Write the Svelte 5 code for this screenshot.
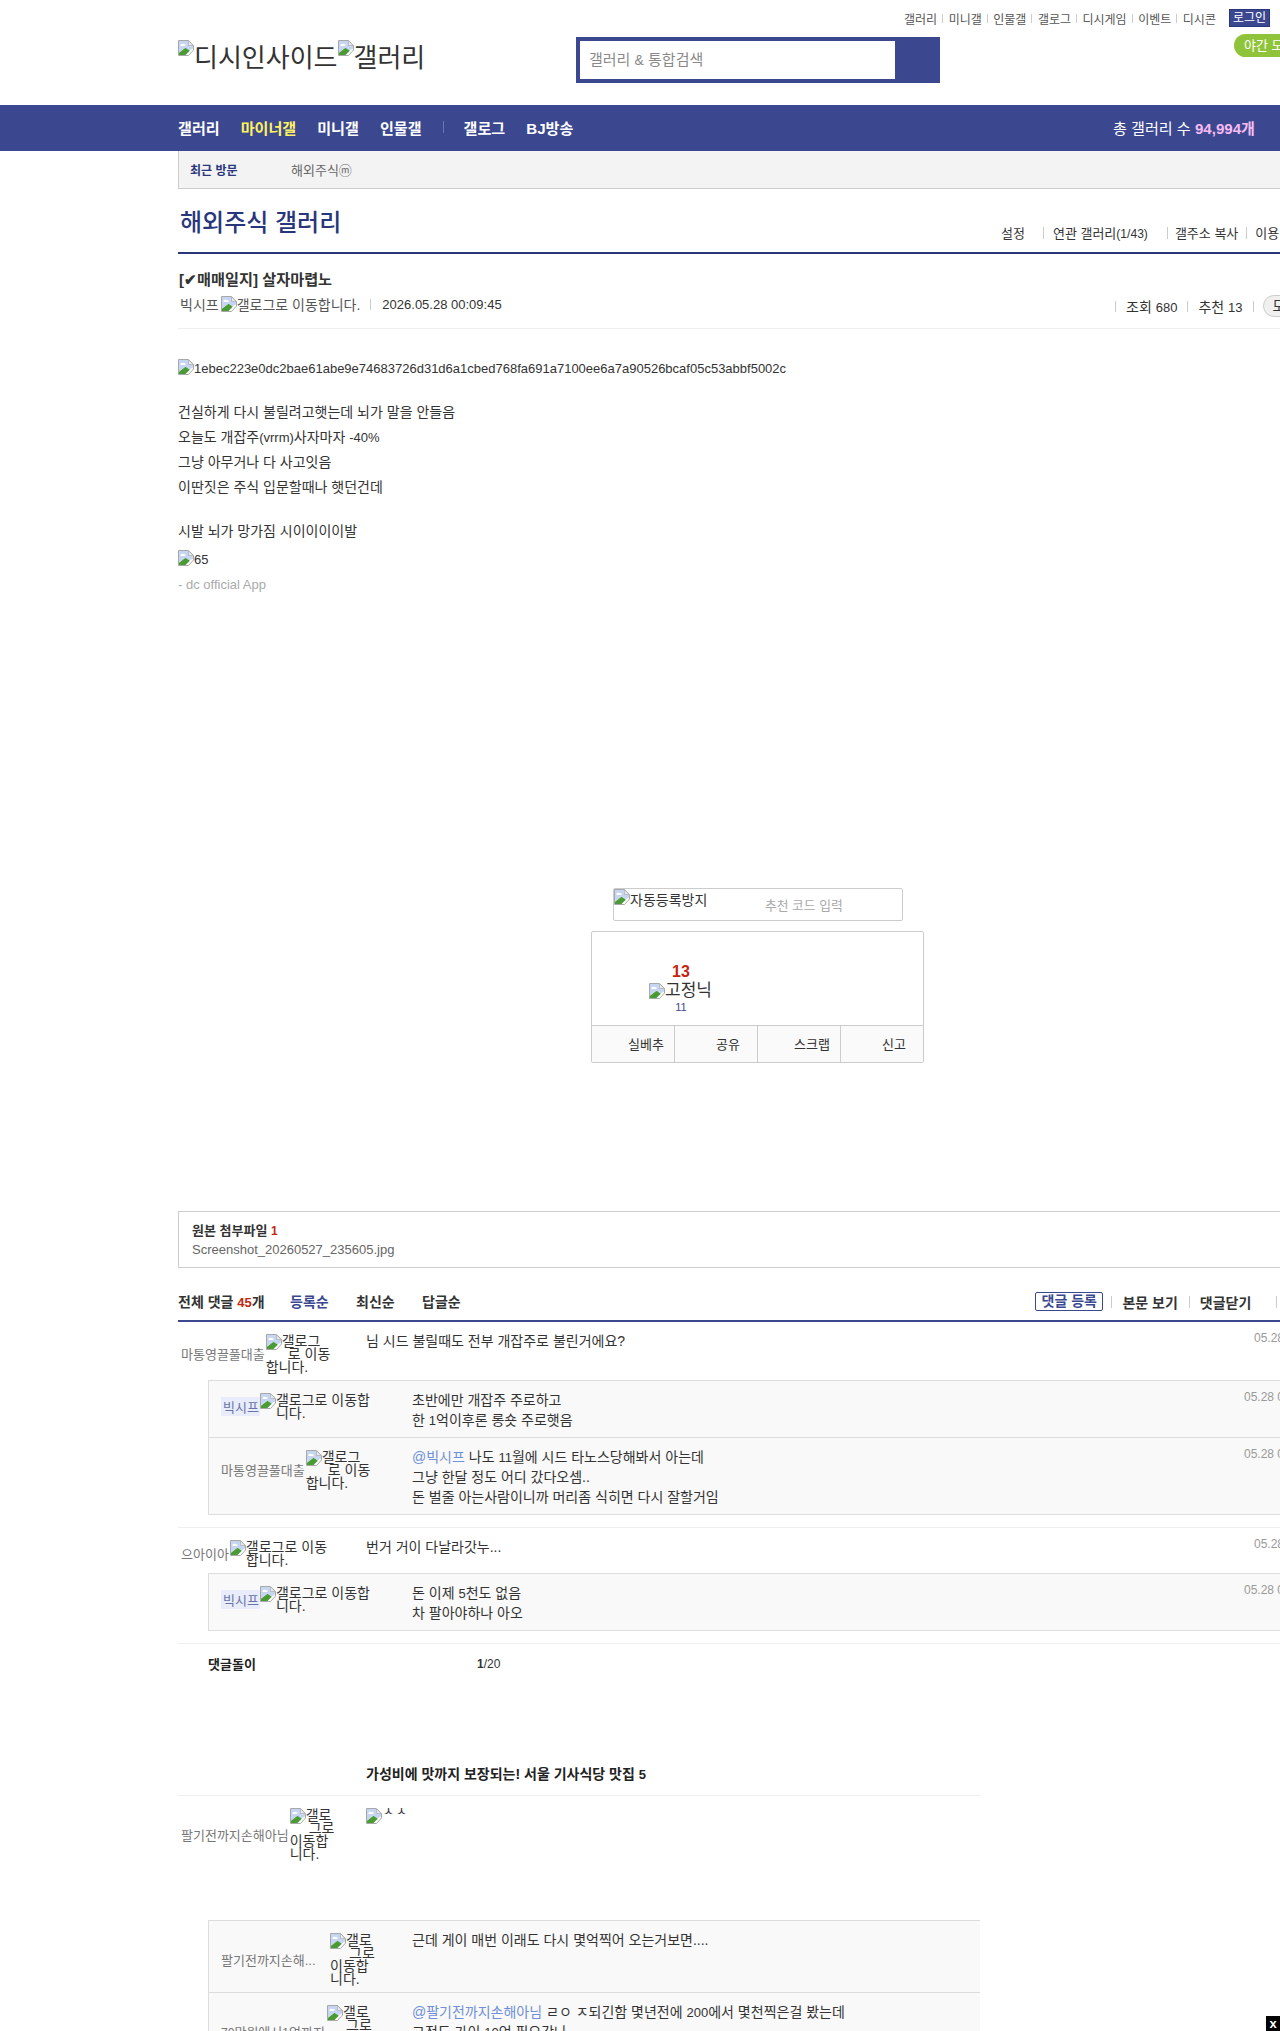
<script>
  const topLinks = ['갤러리', '미니갤', '인물갤', '갤로그', '디시게임', '이벤트', '디시콘'];
  const gnbA = ['갤러리', '마이너갤', '미니갤', '인물갤'];
</script>

{#snippet icon()}
  <svg class="bi" width="16" height="16" viewBox="0 0 16 16" aria-hidden="true">
    <path d="M.5.5H10.500L15.500 5.500V10L10.500 15.500H.5Z" fill="#fff" stroke="#a8a8a8" />
    <path d="M1 1H10.500V5.500H15V8.500L11.500 10.500 7.500 7.500 1 12.500Z" fill="#c6d6f2" />
    <path d="M2.500 5C2.500 3.500 5.500 3.500 6.500 4.300 8.200 4.300 8.200 6 6.500 6H3.200C2.200 6 2 5.200 2.500 5Z" fill="#fff" />
    <path d="M1 15V12.800L7.500 7.800 11.800 10.700 7.500 15Z" fill="#4a9a36" />
    <path d="M10.500.8V5.500H15.200Z" fill="#e9ecf2" stroke="#a8a8a8" stroke-width=".7" />
  </svg>
{/snippet}

{#snippet alt(lines)}
  <span class="alt">{@render icon()}{#each lines as l}<span class="line" class:i16={l[1] === 16} class:i19={l[1] === 19} class:i22={l[1] === 22}>{l[0]}</span>{/each}</span>
{/snippet}

<div class="page">
  <div class="wrap">
    <header class="head">
      <nav class="util">
        {#each topLinks as t, i}
          {#if i > 0}<i class="usep"></i>{/if}<a href="#a">{t}</a>
        {/each}
        <a class="login" href="#a">로그인</a>
      </nav>
      <div class="headrow">
        <div class="logo">{@render icon()}디시인사이드{@render icon()}갤러리</div>
        <div class="search">
          <div class="sinput">갤러리 <span class="n">&amp;</span> 통합검색</div>
        </div>
        <a class="night" href="#a">야간 모드</a>
      </div>
    </header>
  </div>

  <div class="gnb">
    <div class="gnbin">
      {#each gnbA as g, i}<a href="#a" class:on={i === 1}>{g}</a>{/each}
      <i class="gsep"></i>
      <a href="#a">갤로그</a><a href="#a">BJ방송</a>
      <span class="total">총 갤러리 수 <b>94,994개</b></span>
    </div>
  </div>

  <div class="wrap">
    <div class="recent"><strong>최근 방문</strong><span>해외주식ⓜ</span></div>

    <div class="titlebar">
      <h2>해외주식 갤러리</h2>
      <div class="tools">
        <a href="#a" class="t1">설정</a><i></i><a href="#a" class="t2">연관 갤러리<span class="n">(1/43)</span></a><i></i><a href="#a" class="t3">갤주소 복사</a><i></i><a href="#a" class="t4">이용 안내</a>
      </div>
    </div>

    <section class="view">
      <h3>[✔매매일지] 살자마렵노</h3>
      <div class="meta">
        <span class="author">빅시프{@render icon()}<span class="gl">갤로그로 이동합니다.</span></span>
        <i></i>
        <span class="date">2026.05.28 00:09:45</span>
        <span class="count">
          <i></i><span>조회 <span class="n">680</span></span><i></i><span>추천 <span class="n">13</span></span><i></i><span class="pill">모바일</span>
        </span>
      </div>
    </section>

    <article class="body">
      <p class="imgline lat">{@render icon()}1ebec223e0dc2bae61abe9e74683726d31d6a1cbed768fa691a7100ee6a7a90526bcaf05c53abbf5002c</p>
      <p>건실하게 다시 불릴려고햇는데 뇌가 말을 안들음</p>
      <p>오늘도 개잡주<span class="n">(vrrm)</span>사자마자 <span class="n">-40%</span></p>
      <p>그냥 아무거나 다 사고잇음</p>
      <p>이딴짓은 주식 입문할때나 햇던건데</p>
      <p class="gap">시발 뇌가 망가짐 시이이이이발</p>
      <p class="imgline2 lat">{@render icon()}65</p>
      <p class="app lat">- dc official App</p>
    </article>

    <div class="captcha">
      <span class="capimg">{@render icon()}자동등록방지</span>
      <span class="capph">추천 코드 입력</span>
    </div>

    <div class="reco">
      <div class="recotop">
        <div class="num">13</div>
        <div class="fix">{@render icon()}고정닉</div>
        <div class="sub">11</div>
      </div>
      <div class="recobtm">
        <a href="#a">실베추</a><a href="#a" class="two">공유</a><a href="#a">스크랩</a><a href="#a" class="two">신고</a>
      </div>
    </div>

    <div class="attach">
      <strong>원본 첨부파일 <em>1</em></strong>
      <div>Screenshot_20260527_235605.jpg</div>
    </div>

    <div class="chead">
      <strong class="all">전체 댓글 <em class="n">45</em>개</strong>
      <a class="sort on" href="#a">등록순</a>
      <a class="sort" href="#a">최신순</a>
      <a class="sort" href="#a">답글순</a>
      <div class="cright">
        <a class="reg" href="#a">댓글 등록</a><i></i><a class="cv" href="#a">본문 보기</a><i></i><a class="cc" href="#a">댓글닫기</a><i></i><a class="cr" href="#a">새로고침</a>
      </div>
    </div>

    <div class="cmt">
      <div class="who"><span class="nick">마통영끌풀대출</span>{@render alt([['갤로그', 16], ['로 이동', 22], ['합니다.', 0]])}</div>
      <div class="txt">님 시드 불릴때도 전부 개잡주로 불린거에요?</div>
      <div class="when">05.28 00:21:11</div>
    </div>
    <div class="replies">
      <div class="rp">
        <div class="rwho"><span class="nick own">빅시프</span>{@render alt([['갤로그로 이동합', 16], ['니다.', 16]])}</div>
        <div class="rtxt">초반에만 개잡주 주로하고<br />한 <span class="n">1</span>억이후론 롱숏 주로햇음</div>
        <div class="rwhen">05.28 00:25:41</div>
      </div>
      <div class="rp">
        <div class="rwho"><span class="nick">마통영끌풀대출</span>{@render alt([['갤로그', 16], ['로 이동', 22], ['합니다.', 0]])}</div>
        <div class="rtxt"><span class="at">@빅시프</span> 나도 <span class="n">11</span>월에 시드 타노스당해봐서 아는데<br />그냥 한달 정도 어디 갔다오셈..<br />돈 벌줄 아는사람이니까 머리좀 식히면 다시 잘할거임</div>
        <div class="rwhen">05.28 00:29:02</div>
      </div>
    </div>

    <div class="cline"></div>

    <div class="cmt second">
      <div class="who"><span class="nick">으아이아</span>{@render alt([['갤로그로 이동', 16], ['합니다.', 16]])}</div>
      <div class="txt">번거 거이 다날라갓누...</div>
      <div class="when">05.28 00:31:20</div>
    </div>
    <div class="replies">
      <div class="rp">
        <div class="rwho"><span class="nick own">빅시프</span>{@render alt([['갤로그로 이동합', 16], ['니다.', 16]])}</div>
        <div class="rtxt">돈 이제 <span class="n">5</span>천도 없음<br />차 팔아야하나 아오</div>
        <div class="rwhen">05.28 00:33:12</div>
      </div>
    </div>

    <div class="cline"></div>

    <div class="bot">
      <strong>댓글돌이</strong>
      <span class="pg"><b>1</b>/20</span>
    </div>

    <div class="scope">
      <div class="adtitle">가성비에 맛까지 보장되는! 서울 기사식당 맛집 <span class="n">5</span></div>
      <div class="cmt tall">
        <div class="who"><span class="nick">팔기전까지손해아님</span>{@render alt([['갤로', 16], ['그로', 19], ['이동합', 0], ['니다.', 0]])}</div>
        <div class="txt">{@render icon()}<span class="clipalt">ㅅㅅ</span></div>
      </div>
      <div class="replies">
        <div class="rp">
          <div class="rwho"><span class="nick wide">팔기전까지손해...</span>{@render alt([['갤로', 16], ['그로', 19], ['이동합', 0], ['니다.', 0]])}</div>
          <div class="rtxt">근데 게이 매번 이래도 다시 몇억찍어 오는거보면....</div>
        </div>
        <div class="rp">
          <div class="rwho"><span class="nick wide2"><span class="n">70</span>만원에서<span class="n">1</span>억까지</span>{@render alt([['갤로', 16], ['그로', 19], ['이동합', 0], ['니다.', 0]])}</div>
          <div class="rtxt"><span class="at">@팔기전까지손해아님</span> ㄹㅇ ㅈ되긴함 몇년전에 <span class="n">200</span>에서 몇천찍은걸 봤는데<br />그정도 가이 <span class="n">10</span>억 필요갔나</div>
        </div>
      </div>
    </div>
  </div>

  <button class="close">x</button>
</div>

<style>
  :global(body) { margin: 0; background: #fff; }
  .page {
    position: relative; width: 1280px; height: 2031px; overflow: hidden;
    font-family: "Liberation Sans", "Noto Sans CJK KR", sans-serif;
    font-size: 14px; color: #333;
  }
  a { color: inherit; text-decoration: none; }
  i { font-style: normal; }
  em { font-style: normal; color: #c4250f; }
  .n { font-size: .93em; line-height: 0; }
  .lat { font-size: 13px; }
  .bi { display: inline-block; flex: none; }
  .wrap { margin-left: 178px; width: 1280px; }

  .head { height: 105px; position: relative; }
  .util { display: flex; align-items: center; height: 18px; padding: 9px 0 0 726px; font-size: 12px; color: #555; white-space: nowrap; }
  .usep { width: 1px; height: 9px; background: #ccc; margin: 0 5.5px 0 5px; }
  .login { background: #3b4890; border: 1px solid #29367c; color: #fff; padding: 0 3px; height: 16px; line-height: 16px; margin-left: 13px; }
  .headrow { display: flex; align-items: flex-start; margin-top: 10px; }
  .logo { width: 398px; flex: none; font-size: 26px; line-height: 33px; margin-top: 3px; white-space: nowrap; }
  .logo .bi { vertical-align: 11px; }
  .search { width: 364px; flex: none; height: 46px; background: #3b4890; box-sizing: border-box; padding: 4px 45px 4px 4px; }
  .sinput { background: #fff; height: 38px; line-height: 38px; padding-left: 9px; font-size: 15px; color: #8a8a8a; }
  .night { margin: -3px 0 0 294px; height: 23px; line-height: 23px; width: 90px; padding-left: 10px; border-radius: 12px; background: #8fc43a; color: #fff; font-size: 13px; box-sizing: border-box; flex: none; }

  .gnb { height: 46px; background: #3b4890; }
  .gnbin { margin-left: 178px; display: flex; align-items: center; height: 44px; padding-bottom: 2px; width: 1077px; color: #fff; font-size: 15.1px; font-weight: bold; white-space: nowrap; }
  .gnbin a { margin-right: 21px; }
  .gnbin a.on { color: #fff35d; }
  .gsep { width: 1px; height: 12px; background: #6a75b0; margin: 0 20px 0 0; }
  .total { margin-left: auto; font-weight: normal; }
  .total b { color: #f6bcf2; }

  .recent { height: 37px; background: #f3f3f3; border-left: 1px solid #ccc; border-bottom: 1px solid #ccc; display: flex; align-items: center; padding-left: 11px; font-size: 13px; }
  .recent strong { color: #29367c; width: 101px; font-size: 12px; }
  .recent span { color: #666; }

  .titlebar { height: 63px; box-sizing: border-box; border-bottom: 2px solid #29367c; display: flex; position: relative; margin-top: 2px; }
  .titlebar h2 { margin: 0 0 0 2px; font-size: 24px; font-weight: 500; color: #29367c; line-height: 64px; height: 50px; white-space: nowrap; }
  .tools { position: absolute; left: 823px; top: 32px; display: flex; align-items: center; font-size: 13px; white-space: nowrap; }
  .tools i { width: 1px; height: 12px; background: #ccc; }
  .t1 { margin-right: 18px; }
  .t2 { margin: 0 19px 0 9px; }
  .t3 { margin: 0 8px 0 7px; }
  .t4 { margin-left: 8px; }

  .view { height: 75px; box-sizing: border-box; border-bottom: 1px solid #eee; padding-left: 2px; }
  .view h3 { margin: 0 0 0 -1px; font-size: 15.2px; font-weight: bold; line-height: 20px; padding-top: 16px; white-space: nowrap; }
  .meta { display: flex; align-items: center; height: 22px; margin-top: 3px; position: relative; white-space: nowrap; }
  .meta > i { width: 1px; height: 11px; background: #ccc; margin: 0 11px 0 10px; }
  .author { color: #555; display: flex; align-items: center; }
  .author .bi { margin-left: 2px; }
  .date { font-size: 13px; margin-top: 0; color: #333; }
  .count { position: absolute; left: 935px; top: 2px; display: flex; align-items: center; white-space: nowrap; }
  .count i { width: 1px; height: 11px; background: #ccc; margin-right: 10px; }
  .count span { margin-right: 10px; }
  .count .n { margin: 0; }
  .pill { border: 1px solid #ccc; background: #f0f0f0; border-radius: 11px; height: 20px; line-height: 20px; padding: 0 9px; margin: 0 0 0 -1px; }

  .body { padding-top: 27px; height: 530px; box-sizing: border-box; color: #333; line-height: 25px; }
  .body p { margin: 0; height: 25px; white-space: nowrap; }
  .body .bi { vertical-align: -2px; }
  .imgline { margin-bottom: 19px !important; }
  .gap { margin-top: 19px !important; }
  .imgline2 { margin-top: 3px !important; }
  .app { color: #aaa; }

  .captcha { margin: 29px 0 0 435px; width: 290px; height: 33px; box-sizing: border-box; border: 1px solid #ccc; border-radius: 2px; display: flex; position: relative; }
  .capimg { display: flex; align-items: flex-start; font-size: 14px; line-height: 22px; height: 24px; white-space: nowrap; }
  .capph { position: absolute; left: 151px; top: 6px; font-size: 12.8px; color: #aaa; white-space: nowrap; }

  .reco { margin: 10px 0 0 413px; width: 333px; height: 132px; box-sizing: border-box; border: 1px solid #ccc; border-radius: 2px; }
  .recotop { height: 93px; box-sizing: border-box; width: 178px; text-align: center; padding-top: 30px; }
  .num { font-size: 16px; font-weight: bold; color: #c4250f; line-height: 20px; }
  .fix { font-size: 17px; line-height: 16px; height: 18px; display: flex; justify-content: center; align-items: center; margin-left: -1px; }
  .sub { font-size: 11px; color: #3b4890; line-height: 14px; }
  .recobtm { display: flex; border-top: 1px solid #ccc; height: 36px; background: #fafafa; }
  .recobtm a { width: 83px; box-sizing: border-box; text-align: right; padding-right: 10px; line-height: 37px; font-size: 13px; border-left: 1px solid #ccc; }
  .recobtm a.two { padding-right: 17px; }
  .recobtm a:first-child { border-left: 0; width: 82px; }

  .attach { margin-top: 148px; height: 57px; box-sizing: border-box; border: 1px solid #ccc; border-right: 0; padding: 9px 13px; line-height: 19px; color: #666; }
  .attach strong { color: #333; font-size: 13px; display: block; }
  .attach strong em { font-size: 12px; }
  .attach div { font-size: 13px; line-height: 18px; }

  .chead { margin-top: 24px; height: 18px; padding-bottom: 10px; border-bottom: 2px solid #3b4890; display: flex; align-items: center; position: relative; }
  .all { width: 112px; white-space: nowrap; flex: none; }
  .sort { font-weight: bold; width: 66px; flex: none; }
  .sort.on { color: #3b4890; }
  .cright { position: absolute; left: 857px; top: 0; display: flex; align-items: center; font-weight: bold; font-size: 14px; height: 19px; white-space: nowrap; }
  .cright i { width: 1px; height: 12px; background: #ccc; }
  .reg { border: 1px solid #3b4890; border-radius: 2px; color: #3b4890; height: 17px; line-height: 17px; padding: 0 5.5px; margin-right: 8px; font-size: 14px; }
  .cv { margin: 0 11px 0 10px; }
  .cc { margin: 0 25px 0 10px; }
  .cr { margin-left: 10px; }

  .cmt { display: flex; padding: 9px 0 7px; }
  .who { width: 188px; flex: none; display: flex; align-items: center; align-self: flex-start; padding-left: 3px; box-sizing: border-box; padding-top: 3px; }
  .txt { flex: 1; line-height: 20px; }
  .when { width: 204px; flex: none; font-size: 12px; color: #999; line-height: 14px; }
  .nick { font-size: 13px; color: #777; white-space: nowrap; flex: none; margin-right: 1px; }
  .nick.own { background: #e8ecfb; padding: 0 1px 0 2px; color: #6a74a8; margin-right: 0; }
  .nick.wide { width: 108px; }
  .nick.wide2 { width: 105px; margin-top: 0; }
  .alt { display: inline-block; flex: none; font-size: 14px; line-height: 13px; position: relative; white-space: nowrap; color: #333; padding-top: 1px; margin-bottom: -1px; }
  .alt .bi { position: absolute; left: 0; top: 0; }
  .line { display: block; }
  .i16 { padding-left: 16px; }
  .i19 { padding-left: 19px; }
  .i22 { padding-left: 22px; }

  .replies { margin-left: 30px; background: #f9f9f9; border: 1px solid #ddd; border-right: 0; }
  .rp { display: flex; padding: 9px 0 7px; }
  .rp + .rp { border-top: 1px solid #ddd; }
  .rwho { width: 203px; flex: none; box-sizing: border-box; display: flex; align-items: center; align-self: flex-start; padding: 3px 0 0 12px; }
  .rtxt { flex: 1; line-height: 20px; white-space: nowrap; }
  .rwhen { width: 214px; flex: none; font-size: 12px; color: #999; line-height: 14px; }
  .at { color: #6f90d8; }
  .cline { height: 1px; background: #eee; margin-top: 12px; }

  .bot { height: 108px; display: flex; padding-left: 30px; font-size: 13px; line-height: 18px; padding-top: 12px; color: #222; }
  .bot strong { width: 269px; }
  .pg { color: #333; font-size: 12px; margin-top: -1px; }

  .scope { width: 802px; overflow: hidden; }
  .adtitle { margin-left: 188px; font-weight: bold; height: 31px; line-height: 20px; color: #222; white-space: nowrap; }
  .tall { border-top: 1px solid #eee; height: 108px; }
  .tall .txt { padding-top: 3px; display: flex; align-items: flex-start; }
  .clipalt { display: block; height: 6px; overflow: hidden; line-height: 6px; font-size: 14px; }

  .close { position: absolute; right: 0; bottom: 0; width: 14px; height: 15px; padding: 0; border: 0; background: #000; color: #fff; font: bold 13px/13px "Liberation Sans", sans-serif; }
</style>
